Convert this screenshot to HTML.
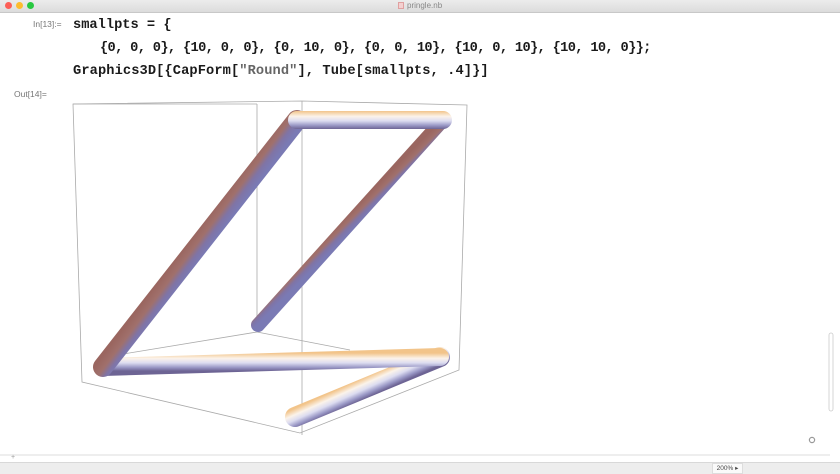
<!DOCTYPE html>
<html><head><style>
html,body{margin:0;padding:0;width:840px;height:473px;overflow:hidden;background:#fff;font-family:"Liberation Sans",sans-serif}
.tb{position:absolute;left:0;top:0;width:840px;height:12px;background:linear-gradient(#ececec,#dcdcdc);border-bottom:1px solid #c8c8c8}
.dot{position:absolute;top:2px;width:7px;height:7px;border-radius:50%}
.code{position:absolute;font-family:"Liberation Mono",monospace;font-weight:bold;font-size:13.7px;color:#1a1a1a;white-space:pre}
.lbl{position:absolute;font-size:8.5px;color:#777}
</style></head><body>
<div class="tb">
<div class="dot" style="left:5px;background:#fc5f57"></div>
<div class="dot" style="left:16px;background:#fdbc2e"></div>
<div class="dot" style="left:27px;background:#28c840"></div>
<div style="position:absolute;left:398px;top:2px;width:6px;height:7px;background:#f4d0d0;border:1px solid #e0a0a0;box-sizing:border-box"></div>
<div style="position:absolute;left:407px;top:1px;font-size:8px;color:#888">pringle.nb</div>
</div>
<div class="lbl" style="left:33px;top:19px">In[13]:=</div>
<div class="code" style="left:73px;top:18px">smallpts = {</div>
<div class="code" style="left:100px;top:41px;letter-spacing:-0.67px">{0, 0, 0}, {10, 0, 0}, {0, 10, 0}, {0, 0, 10}, {10, 0, 10}, {10, 10, 0}};</div>
<div class="code" style="left:73px;top:64px;letter-spacing:0.1px">Graphics3D[{CapForm[<span style="color:#666">"Round"</span>], Tube[smallpts, .4]}]</div>
<div class="lbl" style="left:14px;top:89px">Out[14]=</div>
<svg style="position:absolute;left:0;top:0" width="840" height="473">
<defs>
<linearGradient id="gC" gradientUnits="userSpaceOnUse" x1="192" y1="237" x2="208" y2="249">
<stop offset="0" stop-color="#9a6660"/><stop offset=".4" stop-color="#a0706c"/><stop offset=".7" stop-color="#7f74a6"/><stop offset="1" stop-color="#7a7ab4"/></linearGradient>
<linearGradient id="gB" gradientUnits="userSpaceOnUse" x1="345" y1="217" x2="355" y2="227">
<stop offset="0" stop-color="#9a6660"/><stop offset=".4" stop-color="#a0706c"/><stop offset=".7" stop-color="#7f74a6"/><stop offset="1" stop-color="#7a7ab4"/></linearGradient>
<linearGradient id="gA" gradientUnits="userSpaceOnUse" x1="0" y1="111" x2="0" y2="129">
<stop offset="0" stop-color="#f2c48a"/><stop offset=".3" stop-color="#fbf3ea"/><stop offset=".55" stop-color="#dcdcf0"/><stop offset=".8" stop-color="#9a98c6"/><stop offset="1" stop-color="#6d6494"/></linearGradient>
<linearGradient id="gD" gradientUnits="userSpaceOnUse" x1="0" y1="353" x2="0" y2="371">
<stop offset="0" stop-color="#f2c48a"/><stop offset=".3" stop-color="#fbf3ea"/><stop offset=".55" stop-color="#dcdcf0"/><stop offset=".8" stop-color="#9a98c6"/><stop offset="1" stop-color="#6d6494"/></linearGradient>
<linearGradient id="gE" gradientUnits="userSpaceOnUse" x1="363" y1="378" x2="371" y2="396">
<stop offset="0" stop-color="#f2c48a"/><stop offset=".3" stop-color="#fbf3ea"/><stop offset=".55" stop-color="#dcdcf0"/><stop offset=".8" stop-color="#9a98c6"/><stop offset="1" stop-color="#6d6494"/></linearGradient>
</defs>
<g stroke="#aaa" stroke-width="0.8" fill="none">
<path d="M73 104 L302 101 L467 105 L459 370 L300 433 L82 382 Z"/>
<path d="M302 101 L302 435"/>
<path d="M257 104 L257 332 L117 355"/>
<path d="M257 332 L350 350"/>
<path d="M73 104 L257 104"/>
</g>
<g fill="none" stroke-linecap="round">
<line x1="440" y1="357" x2="295" y2="417" stroke="url(#gE)" stroke-width="20"/>
<line x1="103" y1="367" x2="440" y2="357" stroke="url(#gD)" stroke-width="18"/>
<line x1="297" y1="120" x2="103" y2="367" stroke="url(#gC)" stroke-width="20"/>
<line x1="443" y1="120" x2="258" y2="325" stroke="url(#gB)" stroke-width="14"/>
<line x1="297" y1="120" x2="443" y2="120" stroke="url(#gA)" stroke-width="18"/>
</g>
<rect x="829" y="333" width="4" height="78" rx="2" fill="none" stroke="#ccc" stroke-width="0.8"/>
<circle cx="812" cy="440" r="2.6" fill="none" stroke="#999" stroke-width="1.2"/>
<line x1="0" y1="455" x2="830" y2="455" stroke="#ddd"/>
<text x="11" y="459" font-size="7" fill="#999" font-family="Liberation Sans">+</text>
</svg>
<div style="position:absolute;left:0;top:462px;width:840px;height:11px;background:#ededed;border-top:1px solid #d8d8d8"></div>
<div style="position:absolute;left:712px;top:463px;width:29px;height:9px;background:#fafafa;border:1px solid #ddd;font-size:6.5px;color:#444;line-height:9px;text-align:center">200% ▸</div>
</body></html>
